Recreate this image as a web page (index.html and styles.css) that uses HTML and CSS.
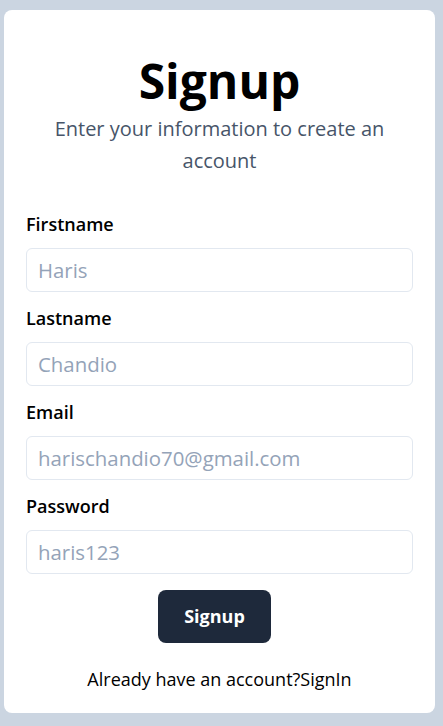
FILE: index.html
```html
<!DOCTYPE html>
<html lang="en">
<head>
<meta charset="utf-8">
<title>Signup</title>
<link rel="stylesheet" href="styles.css">
</head>
<body>
<main class="page">
  <section class="card">
    <h1 class="title">Signup</h1>
    <p class="subtitle">Enter your information to create an account</p>
    <form class="form">
      <div class="field">
        <label class="label" for="first">Firstname</label>
        <input class="input" id="first" type="text" placeholder="Haris">
      </div>
      <div class="field">
        <label class="label" for="last">Lastname</label>
        <input class="input" id="last" type="text" placeholder="Chandio">
      </div>
      <div class="field">
        <label class="label" for="email">Email</label>
        <input class="input" id="email" type="email" placeholder="harischandio70@gmail.com">
      </div>
      <div class="field">
        <label class="label" for="pass">Password</label>
        <input class="input" id="pass" type="text" placeholder="haris123">
      </div>
      <div class="actions">
        <button class="button" type="button">Signup</button>
      </div>
    </form>
    <p class="footer">Already have an account?<a class="link" href="#">SignIn</a></p>
  </section>
</main>
</body>
</html>
```

FILE: styles.css
```css
* { box-sizing: border-box; }
html, body {
  margin: 0;
  padding: 0;
  background: #cbd5e1;
  font-family: "Open Sans", "Noto Sans", sans-serif;
  color: #000;
}
.page {
  padding: 10px 8px 13px 4px;
  min-height: 726px;
}
.card {
  width: 431px;
  background: #fff;
  border-radius: 8px;
  padding: 47px 22px 20px 22px;
}
.title {
  margin: 0;
  font-size: 48px;
  line-height: 48px;
  font-weight: 700;
  text-align: center;
}
.subtitle {
  margin: 8px 0 0 0;
  font-size: 20px;
  line-height: 32px;
  color: #475569;
  text-align: center;
}
.form {
  margin-top: 31px;
  display: flex;
  flex-direction: column;
  gap: 10px;
}
.field {
  display: flex;
  flex-direction: column;
  gap: 10px;
}
.label {
  padding-top: 2px;
  font-size: 18px;
  line-height: 28px;
  font-weight: 600;
}
.input {
  height: 44px;
  width: 100%;
  border: 1px solid #e2e8f0;
  border-radius: 6px;
  padding: 0 11px;
  font-family: inherit;
  font-size: 20.4px;
  color: #0f172a;
  outline: none;
}
.input::placeholder { color: #94a3b8; }
.actions {
  display: flex;
  justify-content: center;
  padding-top: 6px;
}
.button {
  margin-right: 10px;
  background: #1e293b;
  color: #fff;
  border: 0;
  border-radius: 8px;
  padding: 12px 26px;
  font-family: inherit;
  font-size: 18px;
  line-height: 29px;
  font-weight: 700;
}
.footer {
  margin: 22px 0 0 0;
  font-size: 18px;
  line-height: 28px;
  text-align: center;
}
.link {
  color: inherit;
  text-decoration: none;
}
```
